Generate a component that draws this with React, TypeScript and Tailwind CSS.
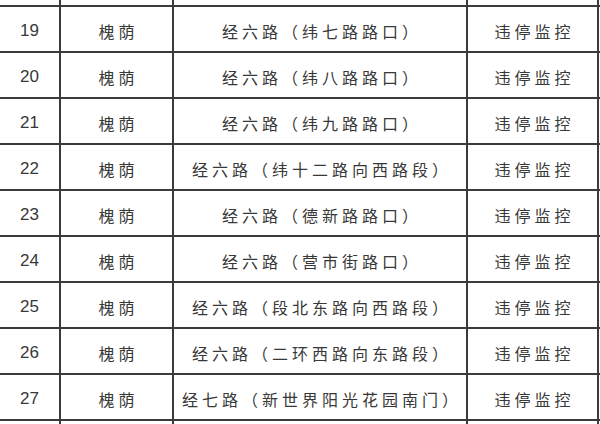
const rows: [string, string, string, string][] = [
  ["19", "槐荫", "经六路（纬七路路口）", "违停监控"],
  ["20", "槐荫", "经六路（纬八路路口）", "违停监控"],
  ["21", "槐荫", "经六路（纬九路路口）", "违停监控"],
  ["22", "槐荫", "经六路（纬十二路向西路段）", "违停监控"],
  ["23", "槐荫", "经六路（德新路路口）", "违停监控"],
  ["24", "槐荫", "经六路（营市街路口）", "违停监控"],
  ["25", "槐荫", "经六路（段北东路向西路段）", "违停监控"],
  ["26", "槐荫", "经六路（二环西路向东路段）", "违停监控"],
  ["27", "槐荫", "经七路（新世界阳光花园南门）", "违停监控"],
];

const cjk = "font-['Noto_Sans_CJK_SC',sans-serif] text-[16px] tracking-[4px] pl-[4px] pt-[3px] text-[#383838]";

function Row({ cells, h, top }: { cells: [string, string, string, string]; h: string; top: boolean }) {
  return (
    <div className={`flex ${h} ${top ? "border-t-2 border-[#3a3a3a]" : ""}`}>
      <div className="w-[61px] border-r-2 border-[#3a3a3a] flex items-center justify-center pt-[3px] font-['Liberation_Sans',sans-serif] text-[17px] text-[#383838]">
        {cells[0]}
      </div>
      <div className={`w-[113px] border-r-2 border-[#3a3a3a] flex items-center justify-center ${cjk}`}>
        {cells[1]}
      </div>
      <div className={`w-[294px] border-r-2 border-[#3a3a3a] flex items-center justify-center ${cjk}`}>
        {cells[2]}
      </div>
      <div className={`w-[131px] border-r-2 border-[#3a3a3a] flex items-center justify-center ${cjk}`}>
        {cells[3]}
      </div>
    </div>
  );
}

export default function App() {
  return (
    <div className="w-[600px] h-[424px] bg-white overflow-hidden">
      <Row cells={["", "", "", ""]} h="h-[5px]" top={false} />
      {rows.map((r) => (
        <Row key={r[0]} cells={r} h="h-[46px]" top={true} />
      ))}
      <Row cells={["", "", "", ""]} h="h-[10px]" top={true} />
    </div>
  );
}
